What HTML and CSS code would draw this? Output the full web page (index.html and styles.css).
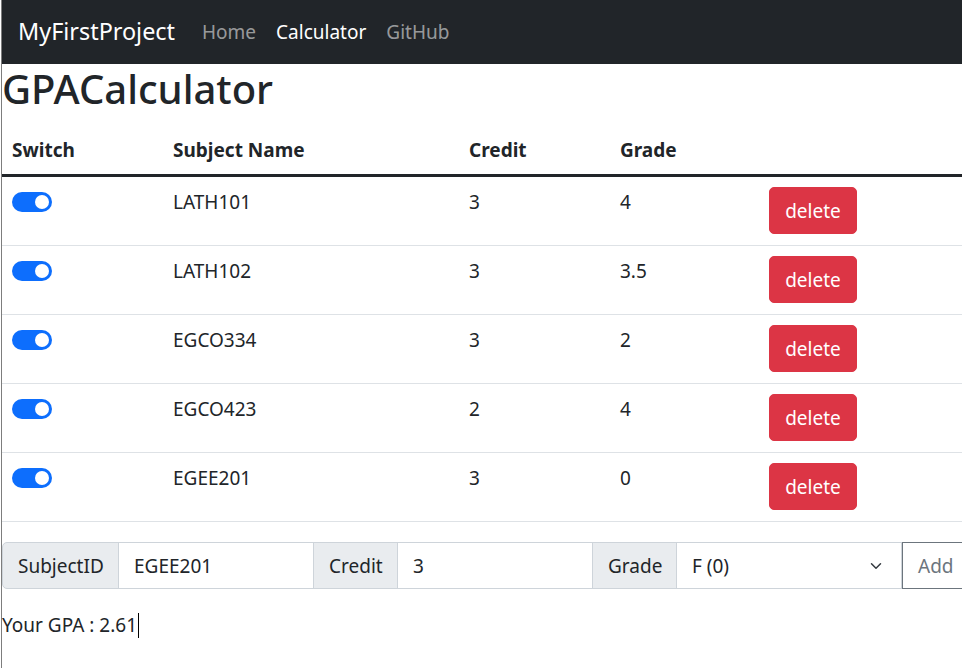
FILE: index.html
```html
<!DOCTYPE html>
<html lang="en">
<head>
<meta charset="utf-8">
<title>GPACalculator</title>
<link rel="stylesheet" href="styles.css">
</head>
<body>
<div class="frame">
  <nav class="navbar">
    <a class="brand" href="#">MyFirstProject</a>
    <ul class="nav">
      <li><a class="nav-link" href="#">Home</a></li>
      <li><a class="nav-link active" href="#">Calculator</a></li>
      <li><a class="nav-link" href="#">GitHub</a></li>
    </ul>
  </nav>
  <main class="main">
    <h1 class="title">GPACalculator</h1>
    <table class="table">
      <colgroup>
        <col class="c-switch"><col class="c-name"><col class="c-credit"><col class="c-grade"><col class="c-action">
      </colgroup>
      <thead>
        <tr><th>Switch</th><th>Subject Name</th><th>Credit</th><th>Grade</th><th></th></tr>
      </thead>
      <tbody>
        <tr><td><span class="switch"><span class="knob"></span></span></td><td>LATH101</td><td>3</td><td>4</td><td><button class="btn-danger">delete</button></td></tr>
        <tr><td><span class="switch"><span class="knob"></span></span></td><td>LATH102</td><td>3</td><td>3.5</td><td><button class="btn-danger">delete</button></td></tr>
        <tr><td><span class="switch"><span class="knob"></span></span></td><td>EGCO334</td><td>3</td><td>2</td><td><button class="btn-danger">delete</button></td></tr>
        <tr><td><span class="switch"><span class="knob"></span></span></td><td>EGCO423</td><td>2</td><td>4</td><td><button class="btn-danger">delete</button></td></tr>
        <tr><td><span class="switch"><span class="knob"></span></span></td><td>EGEE201</td><td>3</td><td>0</td><td><button class="btn-danger">delete</button></td></tr>
      </tbody>
    </table>
    <div class="input-group">
      <span class="ig-text first">SubjectID</span>
      <span class="ig-input w-id">EGEE201</span>
      <span class="ig-text">Credit</span>
      <span class="ig-input w-credit">3</span>
      <span class="ig-text">Grade</span>
      <span class="ig-select">F (0)
        <svg class="chev" width="16" height="12" viewBox="0 0 16 16"><path d="m2 5 6 6 6-6" fill="none" stroke="#343a40" stroke-width="2" stroke-linecap="round" stroke-linejoin="round"/></svg>
      </span>
      <span class="ig-btn">Add</span>
    </div>
    <p class="gpa">Your GPA : 2.61<span class="caret"></span></p>
  </main>
</div>
</body>
</html>
```
FILE: styles.css
```css
html, body {
  margin: 0;
  padding: 0;
  overflow: hidden;
  background: #fff;
}
body {
  font-family: "Noto Sans", "Open Sans", sans-serif;
  font-size: 19px;
  line-height: 30px;
  color: #212529;
}
.frame {
  margin-left: 1px;
  border-left: 1px solid #7d7d7d;
  width: 1100px;
  min-height: 668px;
}
.navbar {
  height: 64px;
  background: #212529;
  display: flex;
  align-items: center;
  padding: 0 16px;
}
.brand {
  color: #fff;
  font-size: 23.4px;
  text-decoration: none;
  margin-right: 17px;
  margin-top: -2px;
}
.nav {
  display: flex;
  list-style: none;
  margin: 0;
  padding: 0;
}
.nav-link {
  display: block;
  padding: 0 10px;
  color: rgba(255, 255, 255, 0.55);
  text-decoration: none;
  font-size: 19px;
}
.nav-link.active {
  color: #fff;
}
.main {
  padding: 0;
}
.title {
  margin: 0 0 10px 0;
  font-size: 40px;
  line-height: 50px;
  font-weight: 500;
  color: #212529;
}
.table {
  border-collapse: collapse;
  table-layout: fixed;
  width: 1000px;
  margin-bottom: 20px;
}
.c-switch { width: 161px; }
.c-name { width: 296px; }
.c-credit { width: 151px; }
.c-grade { width: 149px; }
.c-action { width: 243px; }
.table th {
  text-align: left;
  font-weight: 700;
  padding: 11px 10px 9px;
  vertical-align: bottom;
  border-bottom: 3px solid #212529;
}
.table td {
  padding: 10px 10px 11px;
  vertical-align: top;
  border-bottom: 1px solid #dee2e6;
}
.switch {
  display: block;
  position: relative;
  width: 40px;
  height: 20px;
  margin-top: 5px;
  border-radius: 10px;
  background: #0d6efd;
}
.knob {
  position: absolute;
  right: 3px;
  top: 3px;
  width: 14px;
  height: 14px;
  border-radius: 50%;
  background: #fff;
}
.btn-danger {
  display: block;
  width: 88px;
  height: 47px;
  background: #dc3545;
  border: 1px solid #dc3545;
  border-radius: 5px;
  color: #fff;
  font-family: inherit;
  font-size: 19px;
  padding: 0;
  margin: 0;
}
.input-group {
  display: flex;
  height: 47px;
  margin-bottom: 21px;
}
.input-group > span {
  display: flex;
  align-items: center;
  box-sizing: border-box;
  height: 47px;
  border: 1px solid #ced4da;
  white-space: nowrap;
}
.input-group > span + span {
  margin-left: -1px;
}
.ig-text {
  background: #e9ecef;
  padding: 0 15px;
}
.ig-text.first {
  border-radius: 5px 0 0 5px;
  width: 117px;
}
.ig-input {
  background: #fff;
  padding: 0 15px;
}
.w-id { width: 196px; }
.w-credit { width: 196px; }
.ig-text:nth-child(3) { width: 85px; }
.ig-text:nth-child(5) { width: 85px; }
.ig-select {
  width: 226px;
  padding: 0 15px;
  justify-content: space-between;
}
.chev {
  margin-right: 2px;
}
.ig-btn {
  width: 100px;
  padding: 0 15px;
  color: #6c757d;
  border-color: #6c757d !important;
  position: relative;
  margin-left: 0 !important;
}
.gpa {
  margin: 0;
  display: flex;
  align-items: center;
}
.caret {
  display: inline-block;
  width: 1px;
  height: 25px;
  background: #000;
  margin-left: 1px;
}
```
